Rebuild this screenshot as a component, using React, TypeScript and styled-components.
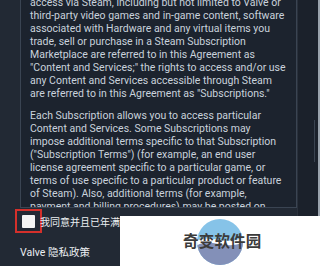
import styled, { createGlobalStyle } from "styled-components";

const Global = createGlobalStyle`
  html, body {
    margin: 0;
    padding: 0;
    background: #222934;
  }
  * { box-sizing: border-box; }
`;

const Screen = styled.div`
  position: relative;
  width: 320px;
  height: 266px;
  overflow: hidden;
  background: #222934;
  font-family: Roboto, "Noto Sans CJK SC", sans-serif;
  display: flex;
`;

const Main = styled.div`
  width: 297px;
  padding-left: 20px;
  display: flex;
  flex-direction: column;
`;

const Agreement = styled.div`
  height: 213px;
  margin-top: -5px;
  padding: 0 6px 0 9px;
  background: #1c232e;
  border: 1px solid #3a4452;
  overflow: hidden;
`;

const Para = styled.p`
  margin: 0 0 9px;
  color: #c9d2dc;
  font-size: 10.5px;
  line-height: 13px;
  white-space: nowrap;
`;

const Line = styled.span`
  display: block;
`;

const Rail = styled.div`
  position: relative;
  flex: 1;
  background: #1b212b;
  border-left: 1px solid #2a313c;
  border-right: 2px solid #9aa3ad;
`;

const Thumb = styled.div`
  position: absolute;
  right: 3px;
  top: 120px;
  width: 1px;
  height: 42px;
  background: #3a4350;
`;

const CheckRow = styled.label`
  display: flex;
  align-items: center;
  height: 24px;
  margin: 1px 0 0 -5px;
  color: #eceff2;
  font-size: 10px;
`;

const Highlight = styled.span`
  display: flex;
  align-items: center;
  justify-content: center;
  width: 27px;
  height: 24px;
  border: 2px solid #d4302b;
`;

const Box = styled.span`
  width: 13px;
  height: 13px;
  background: #f4f4f4;
  border-radius: 1px;
`;

const CheckText = styled.span`
  margin-left: -2px;
  white-space: nowrap;
`;

const Link = styled.div`
  margin-top: 13px;
  color: #eceff2;
  font-size: 10.5px;
  line-height: 14px;
`;

const Watermark = styled.div`
  position: absolute;
  left: 120px;
  top: 216px;
  width: 200px;
  height: 50px;
  background: #ffffff;
`;

const Logo = styled.svg`
  position: absolute;
  left: 76px;
  top: 1px;
`;

const MarkText = styled.span`
  position: absolute;
  left: 63px;
  top: 13px;
  font-size: 15.5px;
  font-weight: 700;
  color: #3b3b3b;
  letter-spacing: 0.2px;
  white-space: nowrap;
  font-family: "Noto Sans CJK SC", sans-serif;
`;

const p1 = [
  "access via Steam, including but not limited to Valve or",
  "third-party video games and in-game content, software",
  "associated with Hardware and any virtual items you",
  "trade, sell or purchase in a Steam Subscription",
  "Marketplace are referred to in this Agreement as",
  "\"Content and Services;\" the rights to access and/or use",
  "any Content and Services accessible through Steam",
  "are referred to in this Agreement as \"Subscriptions.\"",
];

const p2 = [
  "Each Subscription allows you to access particular",
  "Content and Services. Some Subscriptions may",
  "impose additional terms specific to that Subscription",
  "(\"Subscription Terms\") (for example, an end user",
  "license agreement specific to a particular game, or",
  "terms of use specific to a particular product or feature",
  "of Steam). Also, additional terms (for example,",
  "payment and billing procedures) may be posted on",
  "Steam or made available within the applicable",
];

export default function App() {
  return (
    <>
      <Global />
      <Screen>
        <Main>
          <Agreement>
            <Para>
              {p1.map((l) => (
                <Line key={l}>{l}</Line>
              ))}
            </Para>
            <Para>
              {p2.map((l) => (
                <Line key={l}>{l}</Line>
              ))}
            </Para>
          </Agreement>
          <CheckRow>
            <Highlight>
              <Box />
            </Highlight>
            <CheckText>我同意并且已年满 13 周岁</CheckText>
          </CheckRow>
          <Link>Valve 隐私政策</Link>
        </Main>
        <Rail>
          <Thumb />
        </Rail>
        <Watermark>
          <Logo width="48" height="50" viewBox="0 0 48 50">
            <defs>
              <clipPath id="c">
                <circle cx="24" cy="25" r="23" />
              </clipPath>
            </defs>
            <g clipPath="url(#c)">
              <rect x="0" y="0" width="48" height="50" fill="#86c3e8" />
              <path d="M0 26 C14 18 30 34 48 22 L48 50 L0 50 Z" fill="#8390b8" />
              <path d="M0 24 C14 16 30 30 48 20 L48 25 C30 34 14 20 0 29 Z" fill="#ffffff" />
            </g>
          </Logo>
          <MarkText>奇变软件园</MarkText>
        </Watermark>
      </Screen>
    </>
  );
}
